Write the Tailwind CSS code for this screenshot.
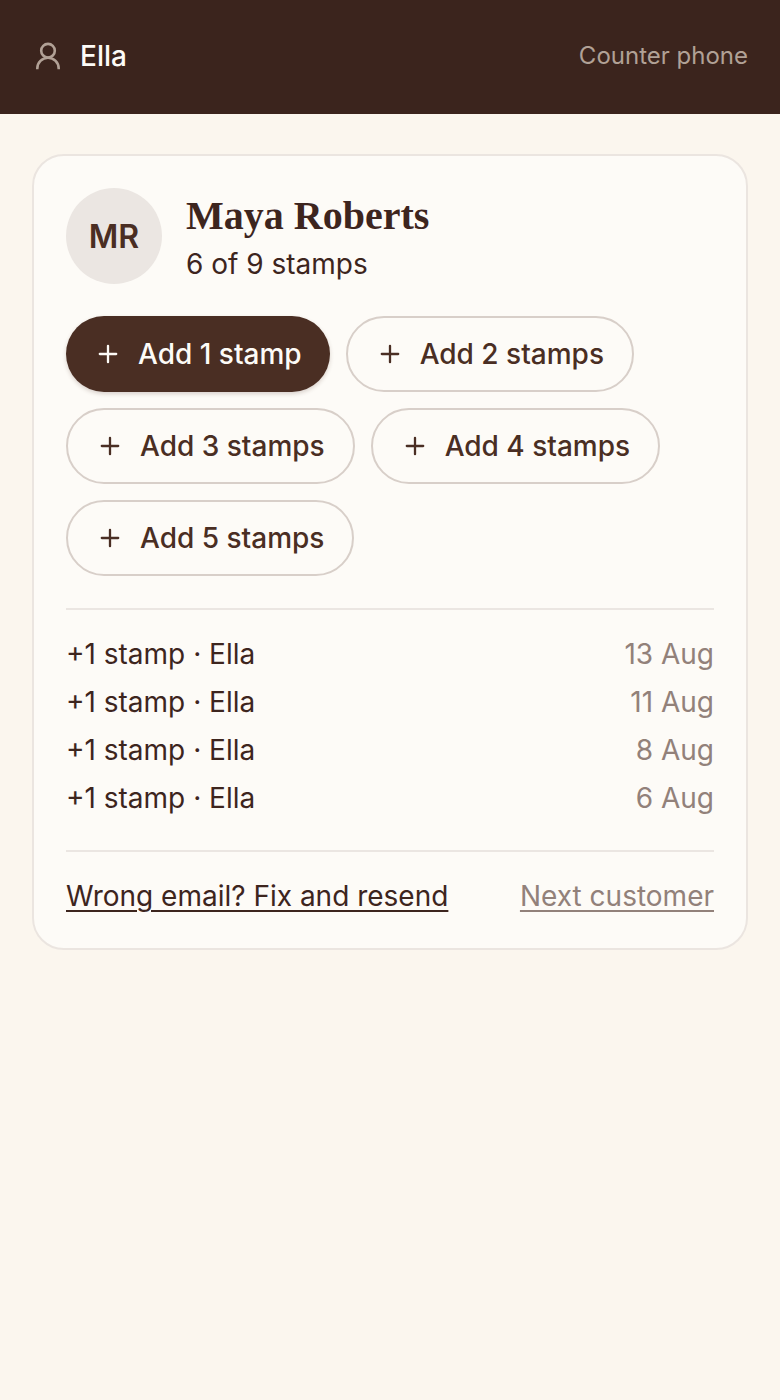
<!DOCTYPE html>
<html lang="en">
<head>
<meta charset="utf-8">
<meta name="viewport" content="width=device-width, initial-scale=1">
<title>Counter phone</title>
<script src="https://cdn.jsdelivr.net/npm/@tailwindcss/browser@4"></script>
</head>
<body class="min-h-screen bg-[#fbf6ee] font-['Inter',sans-serif] text-[28px] leading-10 text-[#3d251e]">
<header class="flex items-center justify-between bg-[#3b241d] px-8 pt-9 pb-[38px]">
  <div class="flex items-center gap-4 font-medium leading-10 text-[#fdfbf7]">
    <svg class="size-8 text-[#b1a196]" viewBox="0 0 32 32" fill="none" stroke="currentColor" stroke-width="2.6" aria-hidden="true"><circle cx="16" cy="10.700" r="6.800"/><path d="M5.300 29.200V28.500a10.700 10.700 0 0 1 21.400 0v.7"/></svg>
    <span>Ella</span>
  </div>
  <span class="text-2xl text-[#b1a196]">Counter phone</span>
</header>
<main class="px-8 py-10">
  <section class="rounded-[32px] border-2 border-[#ebe5e0] bg-[#fdfbf7] p-8">
    <div class="flex items-center gap-6">
      <div class="flex size-24 items-center justify-center rounded-full bg-[#ebe6e2] pt-0.5 text-[32px] font-semibold text-[#4a2e23]">MR</div>
      <div class="flex flex-col gap-1 pt-1">
        <h1 class="font-['Liberation_Serif',serif] text-[40px] font-bold leading-12">Maya Roberts</h1>
        <p>6 of 9 stamps</p>
      </div>
    </div>
    <div class="mt-8 flex flex-wrap gap-4 font-medium text-[#4a2e23]">
      <button type="button" class="flex h-19 items-center gap-4 rounded-full bg-[#4a2e23] px-7 text-[#fdfbf7] shadow-[0_2px_4px_rgba(74,46,35,0.2)]"><svg class="size-7" viewBox="0 0 28 28" fill="none" stroke="currentColor" stroke-width="2.3" stroke-linecap="round" aria-hidden="true"><path d="M14 5.800v16.400M5.800 14h16.400"/></svg>Add 1 stamp</button>
      <button type="button" class="flex h-19 items-center gap-4 rounded-full border-2 border-[#d8cfc9] px-7"><svg class="size-7" viewBox="0 0 28 28" fill="none" stroke="currentColor" stroke-width="2.3" stroke-linecap="round" aria-hidden="true"><path d="M14 5.800v16.400M5.800 14h16.400"/></svg>Add 2 stamps</button>
      <button type="button" class="flex h-19 items-center gap-4 rounded-full border-2 border-[#d8cfc9] px-7"><svg class="size-7" viewBox="0 0 28 28" fill="none" stroke="currentColor" stroke-width="2.3" stroke-linecap="round" aria-hidden="true"><path d="M14 5.800v16.400M5.800 14h16.400"/></svg>Add 3 stamps</button>
      <button type="button" class="flex h-19 items-center gap-4 rounded-full border-2 border-[#d8cfc9] px-7"><svg class="size-7" viewBox="0 0 28 28" fill="none" stroke="currentColor" stroke-width="2.3" stroke-linecap="round" aria-hidden="true"><path d="M14 5.800v16.400M5.800 14h16.400"/></svg>Add 4 stamps</button>
      <button type="button" class="flex h-19 items-center gap-4 rounded-full border-2 border-[#d8cfc9] px-7"><svg class="size-7" viewBox="0 0 28 28" fill="none" stroke="currentColor" stroke-width="2.3" stroke-linecap="round" aria-hidden="true"><path d="M14 5.800v16.400M5.800 14h16.400"/></svg>Add 5 stamps</button>
    </div>
    <ul class="mt-8 flex flex-col gap-2 border-t-2 border-[#ebe6e2] pt-6">
      <li class="flex justify-between"><span>+1 stamp · Ella</span><time class="text-[#92817a]">13 Aug</time></li>
      <li class="flex justify-between"><span>+1 stamp · Ella</span><time class="text-[#92817a]">11 Aug</time></li>
      <li class="flex justify-between"><span>+1 stamp · Ella</span><time class="text-[#92817a]">8 Aug</time></li>
      <li class="flex justify-between"><span>+1 stamp · Ella</span><time class="text-[#92817a]">6 Aug</time></li>
    </ul>
    <div class="mt-8 flex justify-between border-t-2 border-[#ebe6e2] pt-6">
      <a href="#fix-email" class="underline decoration-2 underline-offset-4">Wrong email? Fix and resend</a>
      <a href="#next-customer" class="text-[#92817a] underline decoration-2 underline-offset-4">Next customer</a>
    </div>
  </section>
</main>
</body>
</html>
